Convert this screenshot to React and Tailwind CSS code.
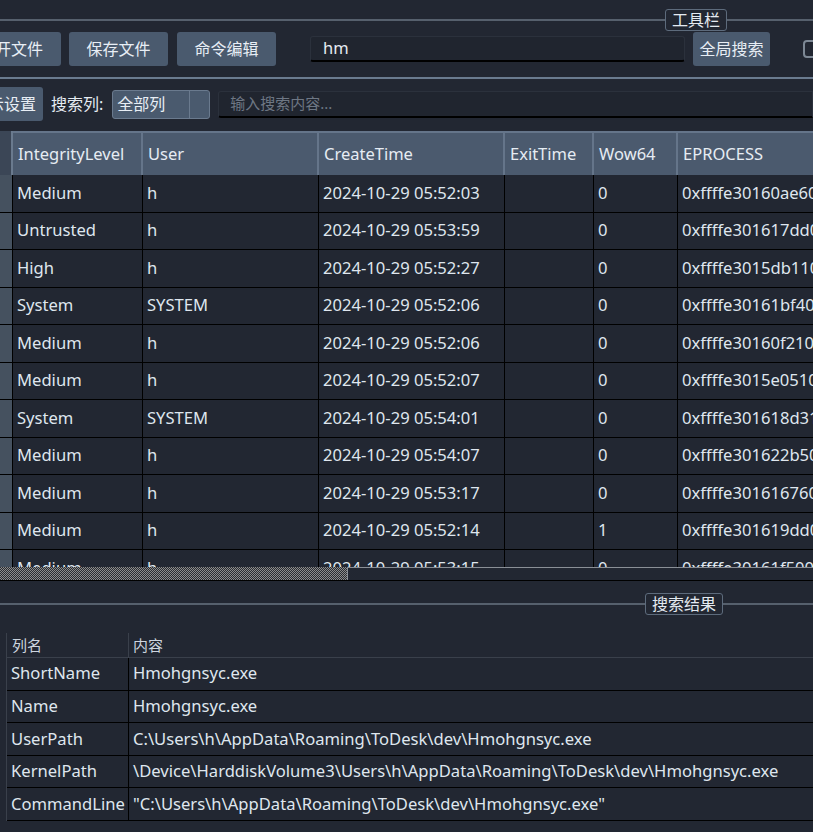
import React from "react";

const rows = [
  ["Medium", "h", "2024-10-29 05:52:03", "0", "0xffffe30160ae6080"],
  ["Untrusted", "h", "2024-10-29 05:53:59", "0", "0xffffe301617dd080"],
  ["High", "h", "2024-10-29 05:52:27", "0", "0xffffe3015db11080"],
  ["System", "SYSTEM", "2024-10-29 05:52:06", "0", "0xffffe30161bf4080"],
  ["Medium", "h", "2024-10-29 05:52:06", "0", "0xffffe30160f21080"],
  ["Medium", "h", "2024-10-29 05:52:07", "0", "0xffffe3015e051080"],
  ["System", "SYSTEM", "2024-10-29 05:54:01", "0", "0xffffe301618d3140"],
  ["Medium", "h", "2024-10-29 05:54:07", "0", "0xffffe301622b5080"],
  ["Medium", "h", "2024-10-29 05:53:17", "0", "0xffffe30161676080"],
  ["Medium", "h", "2024-10-29 05:52:14", "1", "0xffffe301619dd080"],
  ["Medium", "h", "2024-10-29 05:53:15", "0", "0xffffe30161f50080"],
];

const results = [
  ["ShortName", "Hmohgnsyc.exe"],
  ["Name", "Hmohgnsyc.exe"],
  ["UserPath", "C:\\Users\\h\\AppData\\Roaming\\ToDesk\\dev\\Hmohgnsyc.exe"],
  ["KernelPath", "\\Device\\HarddiskVolume3\\Users\\h\\AppData\\Roaming\\ToDesk\\dev\\Hmohgnsyc.exe"],
  ["CommandLine", "\"C:\\Users\\h\\AppData\\Roaming\\ToDesk\\dev\\Hmohgnsyc.exe\""],
];

const cols = "grid grid-cols-[13px_130px_176px_186px_89px_84px_240px]";

const Btn = ({ children, className = "" }) => (
  <button className={`h-[34px] shrink-0 rounded-[3px] bg-[#4a5a6e] text-[16px] text-[#e8eef5] ${className}`}>
    {children}
  </button>
);

const GroupLine = ({ label, right }) => (
  <div className="flex items-center">
    <div className="h-[2px] flex-1 bg-[#56606d]" />
    <div className="shrink-0 rounded-[3px] border border-[#5d6b7c] px-[6px] text-[16px] leading-[20px] text-[#e4eaf1]">
      {label}
    </div>
    <div className={`h-[2px] shrink-0 bg-[#56606d] ${right}`} />
  </div>
);

const App = () => {
  return (
    <div className="h-[832px] w-[813px] overflow-hidden bg-[#222732] font-['Noto_Sans','Noto_Sans_CJK_SC',sans-serif] text-[#dfe6ee]">
      {/* 工具栏 */}
      <div className="pt-[9px]">
        <GroupLine label="工具栏" right="w-[86px]" />
      </div>

      <div className="mt-[1px] flex items-center">
        <Btn className="ml-[-39px] w-[100px]">打开文件</Btn>
        <Btn className="ml-[8px] w-[99px]">保存文件</Btn>
        <Btn className="ml-[9px] w-[99px]">命令编辑</Btn>
        <div className="ml-[34px] flex h-[26px] w-[375px] shrink-0 items-center rounded-[3px] border border-[#2b313c] border-b-2 border-b-black bg-[#20252f] pl-[12px] text-[16.5px] text-[#e6ecf3]">
          hm
        </div>
        <Btn className="ml-[8px] w-[77px]">全局搜索</Btn>
        <div className="ml-[33px] h-[18px] w-[18px] shrink-0 rounded-[4px] border-2 border-[#7d8895]" />
      </div>

      <div className="mt-[11px] h-[2px] bg-[#6a7b8f]" />

      <div className="mt-[8px] flex items-center">
        <Btn className="ml-[-35px] w-[78px]">显示设置</Btn>
        <span className="ml-[8px] shrink-0 text-[16px] text-[#e6ecf3]">搜索列:</span>
        <div className="ml-[9px] flex h-[29px] w-[98px] shrink-0 items-center rounded-[3px] border border-[#6a7a8e] bg-[#4a5a6e] text-[16px] text-[#e8eef5]">
          <span className="flex-1 pl-[4px]">全部列</span>
          <div className="h-full w-[20px] border-l border-[#6a7a8e]" />
        </div>
        <div className="ml-[8px] flex h-[27px] flex-1 items-center rounded-l-[3px] border border-[#2b313c] border-b-2 border-b-black bg-[#20252f] pl-[11px] text-[15px] text-[#6e7784]">
          输入搜索内容...
        </div>
      </div>

      {/* 进程表 */}
      <div className="mt-[10px] h-[436px] overflow-hidden">
        <div className={`${cols} h-[44px] bg-[#4b5a6e] text-[16.5px] text-[#e6ecf3]`}>
          <div className="border-r-2 border-[#6a7a8e] bg-[#3b4656]" />
          {["IntegrityLevel", "User", "CreateTime", "ExitTime", "Wow64", "EPROCESS"].map((h) => (
            <div key={h} className="flex items-center whitespace-nowrap border-r-2 border-t-2 border-[#65758a] pl-[5px]">
              {h}
            </div>
          ))}
        </div>
        {rows.map((r, i) => (
          <div key={i} className={`${cols} h-[37.5px] border-b border-black text-[16.6px]`}>
            <div className="border-r border-black bg-[#45515f]" />
            {[r[0], r[1], r[2], "", r[3], r[4]].map((c, j) => (
              <div key={j} className="flex items-center overflow-hidden whitespace-nowrap border-r border-black pl-[4px]">
                {c}
              </div>
            ))}
          </div>
        ))}
      </div>

      {/* 滚动条 */}
      <div className="flex h-[14px] border-b border-black">
        <div className="w-[347px] bg-[repeating-conic-gradient(#8c8c8c_0_25%,#2a2d33_0_50%)] bg-[length:2px_2px]" />
        <div className="flex-1 border-l border-t border-[#8a8f96] bg-[#222732]" />
      </div>

      {/* 搜索结果 */}
      <div className="mt-[12px]">
        <GroupLine label="搜索结果" right="w-[90px]" />
      </div>

      <div className="ml-[6px] mt-[18px] border-l border-[#3a404b]">
        <div className="grid h-[25px] grid-cols-[122px_1fr] border-b border-[#3a404b] text-[15px] text-[#cdd5df]">
          <div className="flex items-center border-r border-[#3a404b] pl-[5px]">列名</div>
          <div className="flex items-center pl-[4px]">内容</div>
        </div>
        {results.map(([k, v]) => (
          <div key={k} className="grid h-[32.6px] grid-cols-[122px_1fr] border-b border-black text-[16.6px]">
            <div className="flex items-center whitespace-nowrap border-r border-black pl-[4px]">{k}</div>
            <div className="flex items-center whitespace-nowrap pl-[4px]">{v}</div>
          </div>
        ))}
      </div>
    </div>
  );
};

export default App;
